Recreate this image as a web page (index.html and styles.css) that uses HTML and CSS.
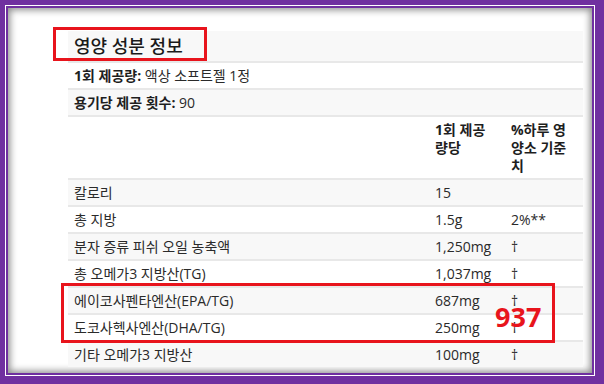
FILE: index.html
```html
<!DOCTYPE html>
<html lang="ko">
<head>
<meta charset="utf-8">
<link rel="stylesheet" href="styles.css">
</head>
<body>
<div class="frame">
  <div class="frame-line">
    <div class="panel">
      <table class="facts">
        <colgroup><col class="c1"><col class="c2"><col class="c3"></colgroup>
        <tr class="title"><td colspan="3">영양 성분 정보</td></tr>
        <tr><td colspan="3"><b>1회 제공량:</b> 액상 소프트젤 1정</td></tr>
        <tr><td colspan="3"><b>용기당 제공 횟수:</b> 90</td></tr>
        <tr class="head"><td></td><td>1회 제공량당</td><td>%하루 영양소 기준치</td></tr>
        <tr><td>칼로리</td><td>15</td><td></td></tr>
        <tr><td>총 지방</td><td>1.5g</td><td>2%**</td></tr>
        <tr><td>분자 증류 피쉬 오일 농축액</td><td>1,250mg</td><td>†</td></tr>
        <tr><td>총 오메가3 지방산(TG)</td><td>1,037mg</td><td>†</td></tr>
        <tr><td>에이코사펜타엔산(EPA/TG)</td><td>687mg</td><td>†</td></tr>
        <tr><td>도코사헥사엔산(DHA/TG)</td><td>250mg</td><td>†</td></tr>
        <tr><td>기타 오메가3 지방산</td><td>100mg</td><td>†</td></tr>
      </table>
      <div class="mark mark-title"></div>
      <div class="mark mark-rows"></div>
      <div class="sum">937</div>
    </div>
  </div>
</div>
</body>
</html>
```
FILE: styles.css
```css
html, body { margin: 0; padding: 0; }
body { font-family: "Open Sans", "Noto Sans CJK KR", sans-serif; }
.frame {
  width: 604px; height: 384px; box-sizing: border-box;
  background: #7030a0;
  padding: 5px 9px 8px 5px;
}
.frame-line {
  height: 100%; box-sizing: border-box;
  border: 1px solid #fff;
  padding: 2px;
  background: #7030a0;
}
.panel {
  position: relative;
  height: 100%; box-sizing: border-box;
  background: #fff;
  box-shadow: inset 0 0 7px 2px rgba(0,0,0,0.45);
  padding: 23px 0 0 60px;
  overflow: hidden;
}
.facts {
  border-collapse: collapse;
  width: 515px;
  font-size: 14px;
  line-height: 18px;
  color: #2a2a2a;
}
.c1 { width: 360px; }
.c2 { width: 76px; }
.c3 { width: 79px; }
.facts td {
  padding: 4px 7px 3px 7px;
  border-top: 2px solid #e8e8e8;
  vertical-align: top;
}
.facts td:first-child { padding-left: 6px; }
.facts tr:nth-child(odd) td { background: #f8f8f8; }
.facts tr:nth-child(even) td { background: #fff; }
.facts tr:first-child td { border-top: none; }
.facts b { font-weight: 700; color: #1e1e1e; }
.title td {
  font-size: 18px; line-height: 22px;
  padding: 4px 7px 4px 7px;
  color: #1a1a1a;
  font-weight: 500;
}
.head td { font-weight: 700; color: #1e1e1e; }
.mark { position: absolute; border: 3px solid #e8141c; }
.mark-title { left: 45px; top: 19px; width: 148px; height: 28px; }
.mark-rows { left: 53px; top: 275px; width: 488px; height: 54px; }
.sum {
  position: absolute; left: 487px; top: 294px;
  font-family: "Open Sans", sans-serif;
  font-weight: 700; font-size: 27px; line-height: 30px;
  color: #e8141c;
}
```
